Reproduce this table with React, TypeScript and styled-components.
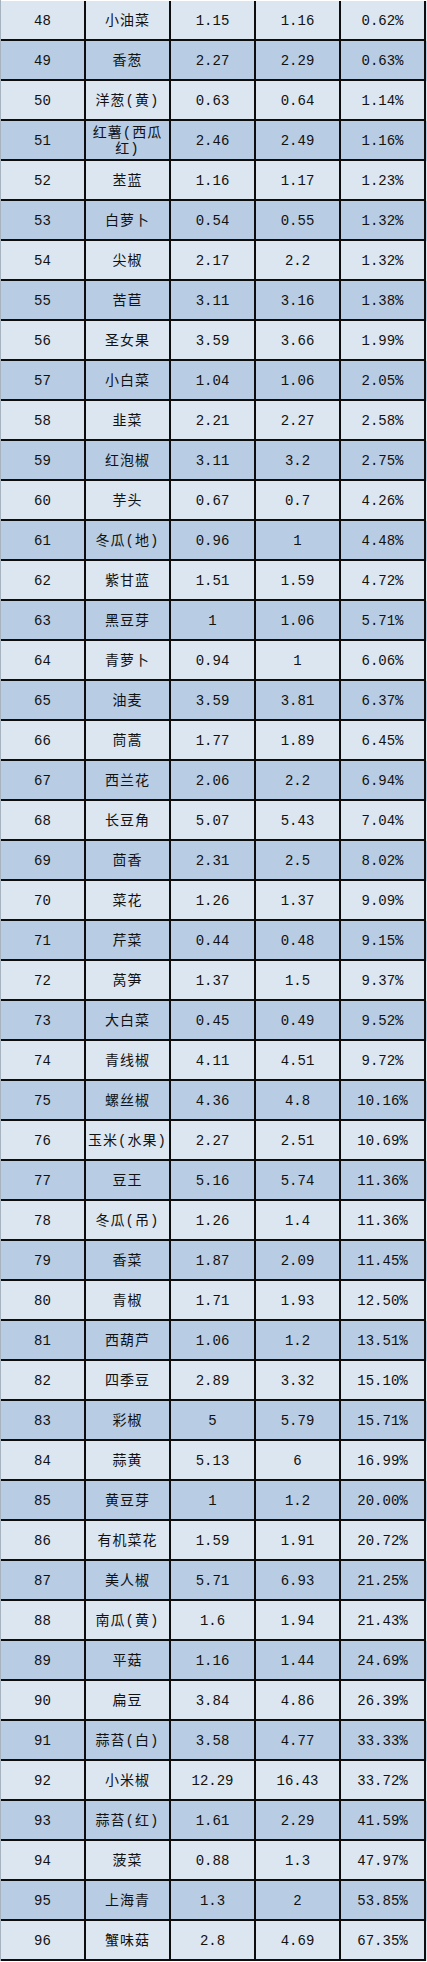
import React from "react";
import styled, { createGlobalStyle } from "styled-components";

const GlobalStyle = createGlobalStyle`
  html, body {
    margin: 0;
    padding: 0;
    background: #ffffff;
  }
  body {
    font-family: "Liberation Mono", "Noto Sans CJK SC", monospace;
  }
`;

type Row = [number, string, string, string, string];

const rows: Row[] = [
  [48, "小油菜", "1.15", "1.16", "0.62%"],
  [49, "香葱", "2.27", "2.29", "0.63%"],
  [50, "洋葱(黄)", "0.63", "0.64", "1.14%"],
  [51, "红薯(西瓜红)", "2.46", "2.49", "1.16%"],
  [52, "苤蓝", "1.16", "1.17", "1.23%"],
  [53, "白萝卜", "0.54", "0.55", "1.32%"],
  [54, "尖椒", "2.17", "2.2", "1.32%"],
  [55, "苦苣", "3.11", "3.16", "1.38%"],
  [56, "圣女果", "3.59", "3.66", "1.99%"],
  [57, "小白菜", "1.04", "1.06", "2.05%"],
  [58, "韭菜", "2.21", "2.27", "2.58%"],
  [59, "红泡椒", "3.11", "3.2", "2.75%"],
  [60, "芋头", "0.67", "0.7", "4.26%"],
  [61, "冬瓜(地)", "0.96", "1", "4.48%"],
  [62, "紫甘蓝", "1.51", "1.59", "4.72%"],
  [63, "黑豆芽", "1", "1.06", "5.71%"],
  [64, "青萝卜", "0.94", "1", "6.06%"],
  [65, "油麦", "3.59", "3.81", "6.37%"],
  [66, "茼蒿", "1.77", "1.89", "6.45%"],
  [67, "西兰花", "2.06", "2.2", "6.94%"],
  [68, "长豆角", "5.07", "5.43", "7.04%"],
  [69, "茴香", "2.31", "2.5", "8.02%"],
  [70, "菜花", "1.26", "1.37", "9.09%"],
  [71, "芹菜", "0.44", "0.48", "9.15%"],
  [72, "莴笋", "1.37", "1.5", "9.37%"],
  [73, "大白菜", "0.45", "0.49", "9.52%"],
  [74, "青线椒", "4.11", "4.51", "9.72%"],
  [75, "螺丝椒", "4.36", "4.8", "10.16%"],
  [76, "玉米(水果)", "2.27", "2.51", "10.69%"],
  [77, "豆王", "5.16", "5.74", "11.36%"],
  [78, "冬瓜(吊)", "1.26", "1.4", "11.36%"],
  [79, "香菜", "1.87", "2.09", "11.45%"],
  [80, "青椒", "1.71", "1.93", "12.50%"],
  [81, "西葫芦", "1.06", "1.2", "13.51%"],
  [82, "四季豆", "2.89", "3.32", "15.10%"],
  [83, "彩椒", "5", "5.79", "15.71%"],
  [84, "蒜黄", "5.13", "6", "16.99%"],
  [85, "黄豆芽", "1", "1.2", "20.00%"],
  [86, "有机菜花", "1.59", "1.91", "20.72%"],
  [87, "美人椒", "5.71", "6.93", "21.25%"],
  [88, "南瓜(黄)", "1.6", "1.94", "21.43%"],
  [89, "平菇", "1.16", "1.44", "24.69%"],
  [90, "扁豆", "3.84", "4.86", "26.39%"],
  [91, "蒜苔(白)", "3.58", "4.77", "33.33%"],
  [92, "小米椒", "12.29", "16.43", "33.72%"],
  [93, "蒜苔(红)", "1.61", "2.29", "41.59%"],
  [94, "菠菜", "0.88", "1.3", "47.97%"],
  [95, "上海青", "1.3", "2", "53.85%"],
  [96, "蟹味菇", "2.8", "4.69", "67.35%"],
];

const Table = styled.div`
  display: flex;
  flex-direction: column;
  box-sizing: border-box;
  width: 427px;
  padding-top: 1px;
  border-left: 1px solid #a7b2bf;
`;

const TableRow = styled.div<{ $dark: boolean }>`
  display: grid;
  grid-template-columns: repeat(5, 85px);
  height: 40px;
  background: ${(p) => (p.$dark ? "#b8cce4" : "#dce6f1")};
`;

const Cell = styled.div<{ $cjk?: boolean }>`
  display: flex;
  align-items: center;
  justify-content: center;
  text-align: center;
  box-sizing: border-box;
  border-right: 2px solid #0d0d0d;
  border-bottom: 2px solid #0d0d0d;
  padding: 2px 1px 0;
  color: #111111;
  font-family: "Liberation Mono", "Noto Sans CJK SC", monospace;
  font-size: 14px;
  line-height: 16px;
  letter-spacing: ${(p) => (p.$cjk ? "1px" : "0")};
  word-break: break-all;
`;

export default function App() {
  return (
    <>
      <GlobalStyle />
      <Table>
        {rows.map(([n, name, a, b, pct]) => (
          <TableRow key={n} $dark={n % 2 === 1}>
            <Cell>{n}</Cell>
            <Cell $cjk>{name}</Cell>
            <Cell>{a}</Cell>
            <Cell>{b}</Cell>
            <Cell>{pct}</Cell>
          </TableRow>
        ))}
      </Table>
    </>
  );
}
